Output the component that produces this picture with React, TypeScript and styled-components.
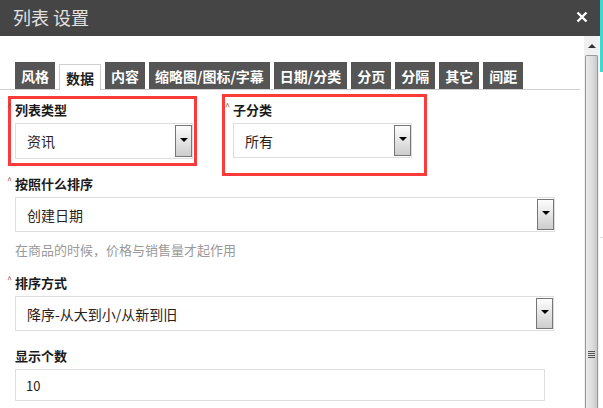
import React from 'react';
import styled, { createGlobalStyle } from 'styled-components';

const GlobalStyle = createGlobalStyle`
  html, body {
    margin: 0;
    padding: 0;
    background: #fff;
  }
  body {
    font-family: "Noto Sans CJK SC", "Noto Sans", "Liberation Sans", sans-serif;
  }
`;

const Frame = styled.div`
  display: flex;
  width: 603px;
  height: 408px;
  overflow: hidden;
`;

const Dialog = styled.div`
  display: flex;
  flex-direction: column;
  width: 600px;
  height: 100%;
`;

const EdgeStrip = styled.div`
  width: 3px;
  display: flex;
  flex-direction: column;
`;

const EdgeAccent = styled.div`
  height: 72px;
  background: #3fd9d0;
`;

const EdgeRest = styled.div`
  flex: 1;
  background: #fff;
  border-top: 165px solid #fff;
  box-shadow: inset 0 166px 0 -165px #ddd;
`;

const Header = styled.div`
  height: 36px;
  flex-shrink: 0;
  background: #454545;
  display: flex;
  align-items: center;
  justify-content: space-between;
  padding: 0 12px 0 13px;
`;

const Title = styled.div`
  color: #e2e2e2;
  font-size: 18px;
  line-height: 20px;
  margin-top: -3px;
`;

const CloseButton = styled.button`
  border: 0;
  padding: 0;
  background: transparent;
  width: 12px;
  height: 12px;
  display: flex;
  margin-top: -3px;
  cursor: pointer;
`;

const Body = styled.div`
  flex: 1;
  display: flex;
  min-height: 0;
`;

const Content = styled.div`
  flex: 1;
  padding-top: 26px;
  min-width: 0;
`;

const TabBar = styled.div`
  display: flex;
  gap: 4px;
  padding-left: 15px;
  margin-right: 4px;
  border-bottom: 1px solid #cfcfcf;
  height: 27px;
  align-items: flex-end;
`;

const Tab = styled.div<{ $active?: boolean }>`
  height: ${p => (p.$active ? '26px' : '27px')};
  box-sizing: border-box;
  padding: 0 6px;
  display: flex;
  align-items: center;
  font-size: 14px;
  font-weight: bold;
  color: ${p => (p.$active ? '#222' : '#fff')};
  background: ${p => (p.$active ? '#fff' : '#555')};
  border: ${p => (p.$active ? '1px solid #cfcfcf' : '0')};
  border-bottom: 0;
  margin-bottom: ${p => (p.$active ? '-1px' : '0')};
  white-space: nowrap;
`;

const Form = styled.div`
  padding: 10px 0 0 15px;
  display: flex;
  flex-direction: column;
`;

const Row = styled.div`
  display: flex;
  gap: 40px;
`;

const Field = styled.div<{ $width: number; $gap?: number }>`
  position: relative;
  width: ${p => p.$width}px;
  margin-bottom: ${p => p.$gap ?? 15}px;
`;

const Highlight = styled.div<{ $inset: string }>`
  position: absolute;
  inset: ${p => p.$inset};
  border: 3px solid #fb3a3a;
  pointer-events: none;
`;

const Label = styled.div<{ $required?: boolean }>`
  position: relative;
  font-size: 13px;
  font-weight: bold;
  color: #1a1a1a;
  line-height: 20px;
  height: 20px;
  margin-bottom: 3px;

  &::before {
    content: ${p => (p.$required ? "'^'" : 'none')};
    position: absolute;
    left: -8px;
    top: -3px;
    font-size: 9px;
    font-weight: normal;
    color: #8a4a3a;
  }
`;

const SelectBox = styled.div<{ $height?: number }>`
  position: relative;
  box-sizing: border-box;
  height: ${p => p.$height ?? 36}px;
  border: 1px solid #dedede;
  background: #fff;
  display: flex;
  align-items: center;
  padding-left: 11px;
  font-size: 14px;
  color: #2a2118;
`;

const DropButton = styled.div`
  position: absolute;
  right: 0;
  top: 1px;
  bottom: 1px;
  width: 17px;
  box-sizing: border-box;
  border: 1px solid #767676;
  background: linear-gradient(#fdfdfd, #cdcdcd);
  display: flex;
  align-items: center;
  justify-content: center;
  padding-bottom: 3px;

  &::after {
    content: '';
    border-left: 4px solid transparent;
    border-right: 4px solid transparent;
    border-top: 4px solid #000;
  }
`;

const Hint = styled.div`
  font-size: 13px;
  line-height: 20px;
  color: #9a9a9a;
  margin: 8px 0 13px;
`;

const InputBox = styled.div`
  box-sizing: border-box;
  width: 530px;
  height: 32px;
  border: 1px solid #dedede;
  display: flex;
  align-items: center;
  padding-left: 10px;
  font-size: 13px;
  color: #2a2118;
`;

const Scrollbar = styled.div`
  width: 15px;
  margin-right: 1px;
  display: flex;
  flex-direction: column;
  background: #f0f0f0;
`;

const ScrollArrow = styled.div`
  height: 19px;
  display: flex;
  align-items: center;
  justify-content: center;

  &::after {
    content: '';
    border-left: 4px solid transparent;
    border-right: 4px solid transparent;
    border-bottom: 4px solid #333;
  }
`;

const Thumb = styled.div`
  flex: 1;
  margin: 0 1px;
  border: 1px solid #9a9a9a;
  border-bottom: 0;
  border-radius: 2px 2px 0 0;
  background: linear-gradient(to right, #eaeaea, #dcdcdc 60%, #c8c8c8);
  display: flex;
  flex-direction: column;
  align-items: center;
  padding-top: 295px;
`;

const Grip = styled.div`
  width: 7px;
  height: 7px;
  background: repeating-linear-gradient(#555 0 1px, transparent 1px 2px);
`;

const tabs = ['风格', '数据', '内容', '缩略图/图标/字幕', '日期/分类', '分页', '分隔', '其它', '间距'];

const Select = ({ value, height }: { value: string; height?: number }) => (
  <SelectBox $height={height}>
    {value}
    <DropButton />
  </SelectBox>
);

const App = () => {
  return (
    <Frame>
      <GlobalStyle />
      <Dialog>
        <Header>
          <Title>列表 设置</Title>
          <CloseButton aria-label="关闭">
            <svg width="12" height="12" viewBox="0 0 12 12">
              <path d="M1.5 1.5 L10.5 10.5 M10.5 1.5 L1.5 10.5" stroke="#fff" strokeWidth="2.4" />
            </svg>
          </CloseButton>
        </Header>
        <Body>
          <Content>
            <TabBar>
              {tabs.map(t => (
                <Tab key={t} $active={t === '数据'}>
                  {t}
                </Tab>
              ))}
            </TabBar>
            <Form>
              <Row>
                <Field $width={178}>
                  <Highlight $inset="-4px -4px -7px -7px" />
                  <Label $required>列表类型</Label>
                  <Select value="资讯" />
                </Field>
                <Field $width={179}>
                  <Highlight $inset="-6px -15px -17px -11px" />
                  <Label $required>子分类</Label>
                  <Select value="所有" height={35} />
                </Field>
              </Row>
              <Field $width={540} $gap={0}>
                <Label $required>按照什么排序</Label>
                <Select value="创建日期" height={35} />
              </Field>
              <Hint>在商品的时候，价格与销售量才起作用</Hint>
              <Field $width={539}>
                <Label $required>排序方式</Label>
                <Select value="降序-从大到小/从新到旧" height={35} />
              </Field>
              <Field $width={530} $gap={0}>
                <Label>显示个数</Label>
                <InputBox>10</InputBox>
              </Field>
            </Form>
          </Content>
          <Scrollbar>
            <ScrollArrow />
            <Thumb>
              <Grip />
            </Thumb>
          </Scrollbar>
        </Body>
      </Dialog>
      <EdgeStrip>
        <EdgeAccent />
        <EdgeRest />
      </EdgeStrip>
    </Frame>
  );
};

export default App;
